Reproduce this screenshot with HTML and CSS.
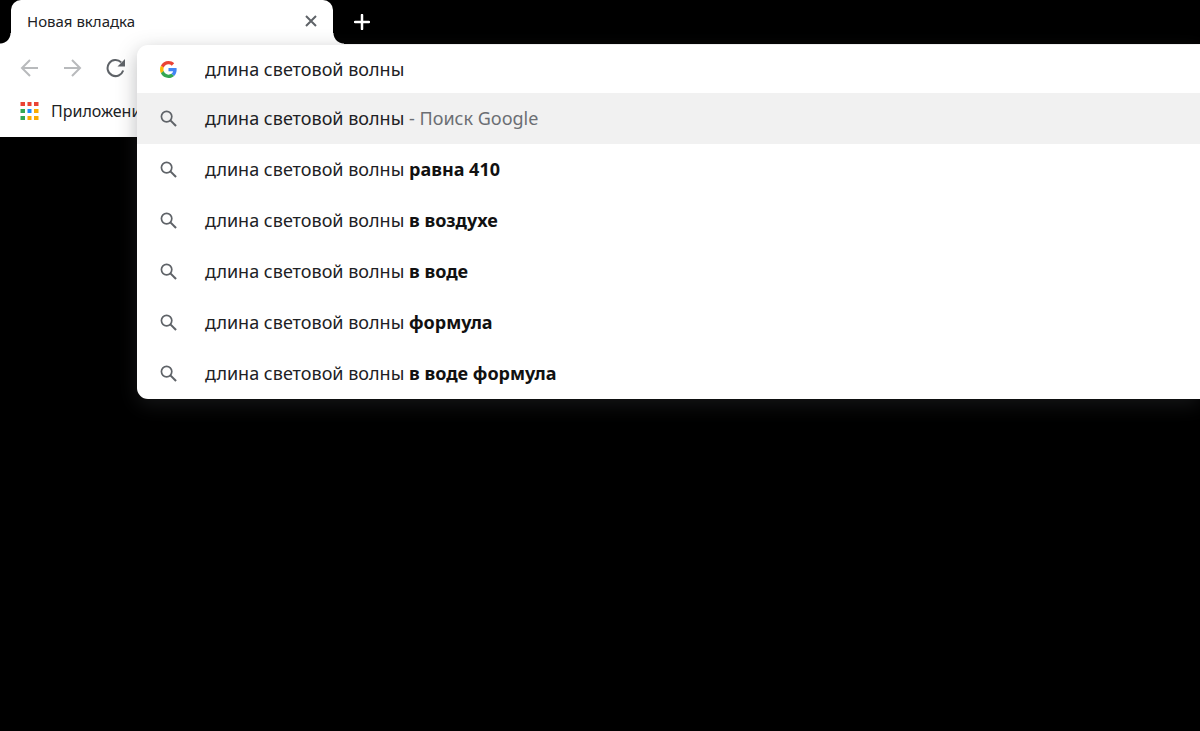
FILE: index.html
```
<!DOCTYPE html>
<html lang="ru">
<head>
    <meta charset="UTF-8">
    <meta name="viewport" content="width=device-width, initial-scale=1.0">
    <title>Новая вкладка</title>
    <link rel="stylesheet" href="styles.css">
</head>
<body>
    <svg class="symbols" aria-hidden="true">
        <symbol id="icon-search" viewBox="0 0 18 18">
            <circle cx="7" cy="7" r="5.5" fill="none" stroke="currentColor" stroke-width="1.8"/>
            <path d="M11 11L17 17" fill="none" stroke="currentColor" stroke-width="2.2"/>
        </symbol>
    </svg>

    <header class="tabs">
        <div class="tab">
            <span class="tab-title">Новая вкладка</span>
            <button class="icon-button tab-close" type="button" aria-label="Закрыть">
                <svg width="12" height="12" viewBox="0 0 12 12"><path d="M1 1L11 11M11 1L1 11"/></svg>
            </button>
        </div>
        <button class="icon-button tab-new" type="button" aria-label="Новая вкладка">
            <svg width="16" height="16" viewBox="0 0 16 16"><path d="M8 1V15M1 8H15"/></svg>
        </button>
    </header>

    <main class="browser">
        <nav class="toolbar">
            <button class="icon-button nav-button" type="button" aria-label="Назад">
                <svg width="20" height="20" viewBox="0 0 20 20"><path d="M18 10H2.500M10 2L2 10L10 18"/></svg>
            </button>
            <button class="icon-button nav-button" type="button" aria-label="Вперёд">
                <svg width="20" height="20" viewBox="0 0 20 20"><path d="M1 10H16.500M9 2L17 10L9 18"/></svg>
            </button>
            <button class="icon-button nav-reload" type="button" aria-label="Обновить">
                <svg width="20" height="20" viewBox="0 0 20 20">
                    <path d="M17.200 12.500A8 8 0 1 1 15.200 4.400" fill="none" stroke="currentColor" stroke-width="2"/>
                    <path d="M19 1V8.500H11.500Z" fill="currentColor"/>
                </svg>
            </button>
        </nav>
        <div class="bookmarks">
            <a class="apps" href="#">
                <svg width="19" height="18" viewBox="0 0 19 18">
                    <path fill="#ea4335" d="M0.500 0h4.500v4h-4.500zM7.500 0h4v4h-4zM14 0h4.500v4h-4.500z"/>
                    <path fill="#34a853" d="M0.500 7h4.500v4h-4.500zM0.500 14h4.500v4h-4.500z"/>
                    <path fill="#1a8cff" d="M7.500 7h4v4h-4z"/>
                    <path fill="#fbab00" d="M14 7h4.500v4h-4.500zM7.500 14h4v4h-4zM14 14h4.500v4h-4.500z"/>
                </svg>
                <span>Приложения</span>
            </a>
        </div>

        <form class="omnibox">
            <div class="query">
                <svg class="icon" viewBox="0 0 48 48">
                    <path fill="#ea4335" d="M24 9.500c3.540 0 6.710 1.220 9.210 3.600l6.850-6.850C35.900 2.380 30.470 0 24 0 14.620 0 6.510 5.380 2.560 13.220l7.980 6.190C12.430 13.720 17.740 9.500 24 9.500z"/>
                    <path fill="#4285f4" d="M46.980 24.550c0-1.570-.150-3.090-.380-4.550H24v9.020h12.940c-.580 2.960-2.260 5.480-4.780 7.180l7.730 6c4.510-4.180 7.090-10.360 7.090-17.650z"/>
                    <path fill="#fbbc05" d="M10.530 28.590c-.480-1.450-.760-2.990-.760-4.590s.270-3.140.760-4.590l-7.980-6.190C.920 16.460 0 20.120 0 24s.920 7.540 2.560 10.780l7.970-6.190z"/>
                    <path fill="#34a853" d="M24 48c6.480 0 11.930-2.130 15.890-5.810l-7.730-6c-2.150 1.450-4.920 2.300-8.160 2.300-6.260 0-11.570-4.220-13.470-9.910l-7.980 6.190C6.510 42.620 14.620 48 24 48z"/>
                </svg>
                <input type="text" value="длина световой волны" aria-label="Поиск" autocomplete="off" spellcheck="false">
            </div>
            <ul class="suggestions">
                <li class="active">
                    <svg class="icon"><use href="#icon-search"/></svg>
                    <a href="#">длина световой волны <span>- Поиск Google</span></a>
                </li>
                <li>
                    <svg class="icon"><use href="#icon-search"/></svg>
                    <a href="#">длина световой волны <b>равна 410</b></a>
                </li>
                <li>
                    <svg class="icon"><use href="#icon-search"/></svg>
                    <a href="#">длина световой волны <b>в воздухе</b></a>
                </li>
                <li>
                    <svg class="icon"><use href="#icon-search"/></svg>
                    <a href="#">длина световой волны <b>в воде</b></a>
                </li>
                <li>
                    <svg class="icon"><use href="#icon-search"/></svg>
                    <a href="#">длина световой волны <b>формула</b></a>
                </li>
                <li>
                    <svg class="icon"><use href="#icon-search"/></svg>
                    <a href="#">длина световой волны <b>в воде формула</b></a>
                </li>
            </ul>
        </form>
    </main>
</body>
</html>
```
FILE: styles.css
```
* {
    box-sizing: border-box;
}

body {
    min-height: 100vh;
    margin: 0;
    background: #000;
    color: #202124;
    font-family: "Segoe UI", "Noto Sans", "Open Sans", sans-serif;
    font-size: 18px;
}

.symbols {
    display: none;
}

.icon-button {
    display: flex;
    align-items: center;
    justify-content: center;
    padding: 0;
    border: 0;
    background: none;
    color: #5f6368;
}

.icon-button path {
    stroke-width: 2;
}

.tab-close path,
.tab-new path,
.nav-button path {
    fill: none;
    stroke: currentColor;
}

.tabs {
    display: flex;
    align-items: center;
    height: 44px;
    padding-left: 11px;
}

.tab {
    position: relative;
    display: flex;
    align-items: center;
    justify-content: space-between;
    width: 322px;
    height: 44px;
    padding: 0 16px 2px;
    border-radius: 10px 10px 0 0;
    background: #fff;
    font-size: 15px;
}

/* curved feet of the active tab */
.tab::before,
.tab::after {
    content: "";
    position: absolute;
    bottom: 0;
    width: 11px;
    height: 11px;
}

.tab::before {
    right: 100%;
    background: radial-gradient(circle at 0 0, #000 10px, #fff 11px);
}

.tab::after {
    left: 100%;
    background: radial-gradient(circle at 100% 0, #000 10px, #fff 11px);
}

.tab-new {
    margin-left: 21px;
    color: #fff;
}

.icon-button.tab-new path {
    stroke-linecap: round;
    stroke-width: 2.5;
}

.browser {
    position: relative;
    background: #fff;
}

.toolbar {
    display: flex;
    align-items: center;
    gap: 23px;
    height: 48px;
    padding-left: 20px;
}

.nav-button {
    color: #b8babc;
}

.bookmarks {
    display: flex;
    align-items: center;
    height: 45px;
    padding: 0 0 7px 20px;
}

.apps {
    display: flex;
    align-items: center;
    gap: 12px;
    color: #202124;
    font-size: 16px;
    text-decoration: none;
}

/* address bar opened over the toolbar, runs to the window edge */
.omnibox {
    position: absolute;
    top: 1px;
    left: 137px;
    right: 0;
    border-radius: 11px 0 0 11px;
    background: #fff;
    box-shadow: 0 6px 20px rgba(60, 64, 67, 0.35);
}

.query,
.suggestions li {
    display: flex;
    align-items: center;
    gap: 28px;
    height: 51px;
    padding-left: 23px;
}

.query {
    height: 48px;
}

.query input {
    flex: 1;
    min-width: 0;
    padding: 0;
    border: 0;
    outline: 0;
    background: none;
    color: inherit;
    font: inherit;
}

.icon {
    flex: none;
    width: 17px;
    height: 17px;
    color: #5f6368;
}

.suggestions {
    margin: 0;
    padding: 0;
    list-style: none;
}

.suggestions .active {
    background: #f1f1f1;
}

.suggestions a {
    padding-bottom: 2px;
    color: inherit;
    text-decoration: none;
}

.suggestions span {
    color: #6b6e73;
}

.suggestions b {
    color: #111;
}
```
